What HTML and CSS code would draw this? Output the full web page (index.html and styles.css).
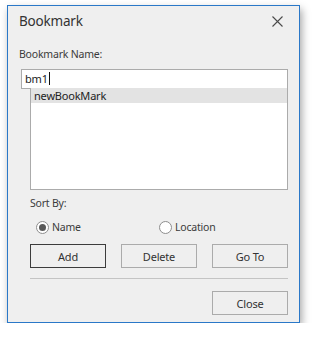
FILE: index.html
```html
<!DOCTYPE html>
<html lang="en">
<head>
  <meta charset="UTF-8">
  <title>Bookmark</title>
  <link rel="stylesheet" href="styles.css">
</head>
<body>
  <div class="dialog">
    <div class="dialog-header">
      <span class="dialog-title">Bookmark</span>
      <svg class="close-x" width="11" height="11" viewBox="0 0 11 11">
        <path d="M0.5 0.5 L10.5 10.5 M10.5 0.5 L0.5 10.5" stroke="#4a4a4a" stroke-width="1.1" fill="none"/>
      </svg>
    </div>

    <div class="dialog-body">
      <div class="field-label">Bookmark Name:</div>
      <div class="name-input">bm1<span class="caret"></span></div>
      <div class="name-list">
        <div class="list-row selected">newBookMark</div>
      </div>

      <div class="sort-label">Sort By:</div>
      <div class="radio-row">
        <label class="radio checked"><span class="radio-dot"></span>Name</label>
        <label class="radio"><span class="radio-dot"></span>Location</label>
      </div>

      <div class="button-row">
        <button class="btn btn-default">Add</button>
        <button class="btn">Delete</button>
        <button class="btn">Go To</button>
      </div>

      <div class="separator"></div>

      <div class="footer-row">
        <button class="btn">Close</button>
      </div>
    </div>
  </div>
</body>
</html>
```

FILE: styles.css
```css
:root {
  --bg: #efefef;
  --text: #3b3b3b;
  --frame: #2a78c8;
  --line: #ababab;
  --font-ui: 'Noto Sans', 'Open Sans', sans-serif;
}

body {
  margin: 0;
  background: #ffffff;
  font-family: var(--font-ui);
  color: var(--text);
}

.dialog {
  box-sizing: border-box;
  width: 293px;
  height: 318px;
  margin: 5px 0 0 7px;
  background: var(--bg);
  border: 1px solid var(--frame);
  box-shadow: 2px 4px 8px rgba(0, 0, 0, 0.35);
}

.dialog-header {
  display: flex;
  align-items: center;
  justify-content: space-between;
  height: 30px;
  padding: 0 16px 0 11px;
}

.dialog-title {
  font-size: 13.5px;
  letter-spacing: -0.2px;
  color: #333;
}

.close-x {
  display: block;
}

.dialog-body {
  padding: 0 11px 0 11px;
  font-size: 10.5px;
  letter-spacing: -0.2px;
}

.field-label {
  line-height: 14px;
  margin-top: 11px;
}

.name-input {
  box-sizing: border-box;
  height: 20px;
  margin: 8px 0 0 2px;
  padding: 0 3px;
  background: #fff;
  border: 1px solid var(--line);
  font-size: 11px;
  line-height: 18px;
  color: #222;
}

.caret {
  display: inline-block;
  width: 1px;
  height: 13px;
  background: #111;
  vertical-align: -2px;
  margin-left: 1px;
}

.name-list {
  box-sizing: border-box;
  height: 102px;
  margin: -1px 0 0 11px;
  background: #fff;
  border: 1px solid var(--line);
  border-top: none;
}

.list-row {
  height: 15px;
  line-height: 15px;
  padding: 0 3px;
  font-size: 11px;
  color: #222;
}

.list-row.selected {
  background: #e3e3e3;
}

.sort-label {
  margin: 6px 0 0 11px;
  line-height: 14px;
}

.radio-row {
  display: flex;
  margin: 9px 0 0 17px;
  height: 16px;
  align-items: center;
}

.radio {
  display: flex;
  align-items: center;
  gap: 3px;
}

.radio:first-child {
  width: 123px;
}

.radio-dot {
  box-sizing: border-box;
  width: 13px;
  height: 13px;
  border: 1px solid #8e8e8e;
  border-radius: 50%;
  background: #fff;
  position: relative;
}

.radio.checked .radio-dot::after {
  content: "";
  position: absolute;
  left: 2px;
  top: 2px;
  width: 7px;
  height: 7px;
  border-radius: 50%;
  background: #595959;
}

.button-row {
  display: flex;
  justify-content: space-between;
  margin: 9px 0 0 11px;
}

.btn {
  box-sizing: border-box;
  width: 76px;
  height: 24px;
  padding: 0;
  background: var(--bg);
  border: 1px solid var(--line);
  font-family: var(--font-ui);
  font-size: 11px;
  letter-spacing: -0.2px;
  color: #333;
}

.btn-default {
  border-color: #3c3c3c;
}

.separator {
  height: 1px;
  margin: 10px 0 0 11px;
  background: #c4c4c4;
}

.footer-row {
  display: flex;
  justify-content: flex-end;
  margin-top: 12px;
}
```
